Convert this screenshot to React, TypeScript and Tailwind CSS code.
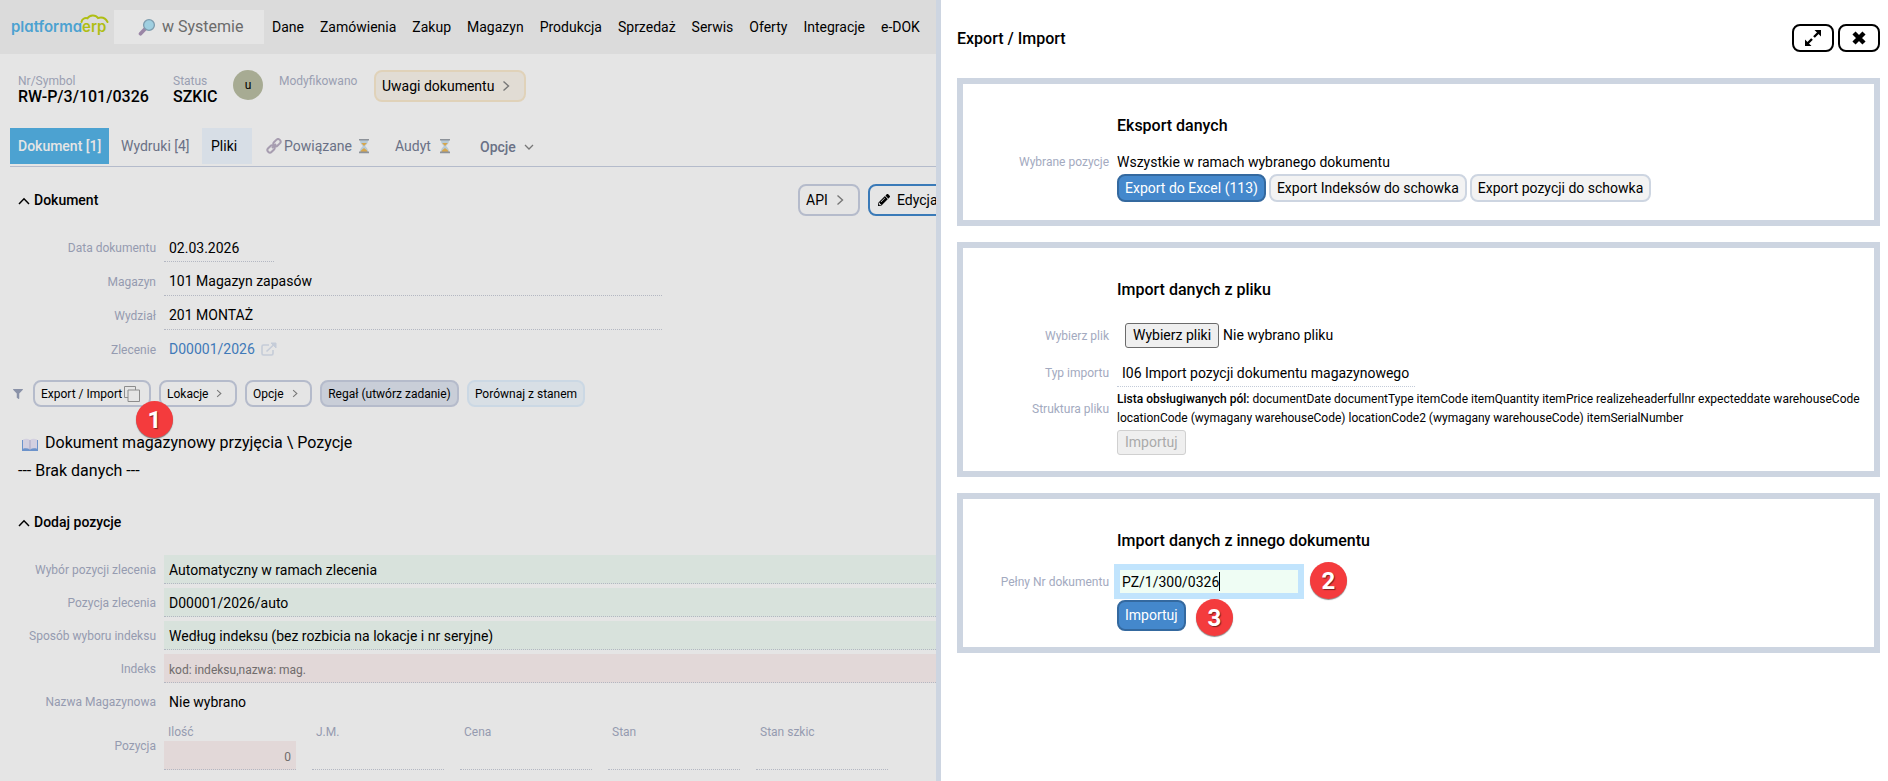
import type { ReactNode } from "react";
import { FaFilter, FaPencilAlt } from "react-icons/fa";

const NAV = ["Dane", "Zamówienia", "Zakup", "Magazyn", "Produkcja", "Sprzedaż", "Serwis", "Oferty", "Integracje", "e-DOK"];

function Chevron({ className = "h-3 w-2" }: { className?: string }) {
  return (
    <svg viewBox="0 0 8 12" className={`fill-none stroke-[#777777] stroke-[1.4] ${className}`} aria-hidden="true">
      <path d="M1.500 1.500 6.500 6l-5 4.500" />
    </svg>
  );
}

function Caret() {
  return (
    <svg viewBox="0 0 12 8" className="mt-0.5 h-2 w-3 fill-none stroke-black stroke-[1.5]" aria-hidden="true">
      <path d="M1 7 6 1.800 11 7" />
    </svg>
  );
}

function Hourglass() {
  return (
    <svg viewBox="0 0 12 16" className="h-4 w-3" aria-hidden="true">
      <path d="M2 2c0 3.500 1.500 4.500 3 6-1.500 1.500-3 2.500-3 6h8c0-3.500-1.500-4.500-3-6 1.500-1.500 3-2.500 3-6z" fill="#b7cad6" />
      <path d="M3.200 5h5.600L6 8zM2.500 14c.2-2 2-2.500 3.500-4 1.500 1.500 3.300 2 3.500 4z" fill="#d6a64c" />
      <path d="M1 1h10v1.600H1zM1 13.600h10v1.600H1z" fill="#8d9299" />
    </svg>
  );
}

function Logo() {
  return (
    <a href="#start" className="relative flex w-[98px] text-[15px] font-semibold leading-6 text-[#4ca2d1] font-['Inter',sans-serif] [font-feature-settings:'cv11','ss01']">
      platforma<span className="text-[#afbe13]">erp</span>
      <svg viewBox="0 0 29 9" className="absolute -top-px right-0 h-[9px] w-[29px] fill-none stroke-[#afbe13] stroke-2" aria-hidden="true">
        <path d="M1.500 8C2 5 4.500 3.600 7.500 4.300 9.500.8 15.500.3 18 4c3.500-1 7.500 0 9.500 4" strokeLinecap="round" />
      </svg>
    </a>
  );
}

function Magnifier() {
  return (
    <svg viewBox="0 0 18 18" className="h-[18px] w-[18px] shrink-0" aria-hidden="true">
      <path d="M2.500 15.800 7 11" stroke="#9a86a6" strokeWidth="3.600" strokeLinecap="round" />
      <circle cx="11" cy="7" r="5.400" fill="#9fcfe0" stroke="#7d9cae" strokeWidth="1.300" />
    </svg>
  );
}

function LinkIcon() {
  return (
    <svg viewBox="0 0 16 16" className="h-4 w-4 fill-none stroke-[#a79db0] stroke-2" aria-hidden="true">
      <rect x="7" y="2.200" width="8" height="5" rx="2.500" transform="rotate(-45 11 4.700)" />
      <rect x="1" y="8.500" width="8" height="5" rx="2.500" transform="rotate(-45 5 11)" />
      <path d="m6 10 4-4" />
    </svg>
  );
}

function Book() {
  return (
    <svg viewBox="0 0 18 14" className="mt-1 h-3.5 w-[18px]" aria-hidden="true">
      <path d="M1 2h16v11H1z" fill="#6c93cb" />
      <path d="M2 1.500C4.500.3 7 .5 9 2c2-1.500 4.500-1.700 7-.5v9.300c-2.500-.8-5-.6-7 .7-2-1.300-4.500-1.500-7-.7z" fill="#d3d0e0" />
      <path d="M9 2v9.500" stroke="#a9a7c4" />
    </svg>
  );
}

function Badge({ n, className }: { n: number; className: string }) {
  return (
    <span className={`absolute z-10 flex h-[37px] w-[37px] items-center justify-center rounded-full bg-[#f43b3d] text-[24px] font-bold leading-none text-white shadow-[0_1px_1px_rgba(0,0,0,0.45)] [text-shadow:1px_1px_1px_rgba(0,0,0,0.5)] ${className}`}>
      {n}
    </span>
  );
}

function Row({ label, id, low = false, children }: { label: string; id: string; low?: boolean; children: ReactNode }) {
  return (
    <div className="grid grid-cols-[146px_minmax(0,1fr)] items-center gap-x-2">
      <label htmlFor={id} className={`text-right text-[12px] leading-4 text-[#959bb0] ${low ? "pt-1.5" : "pt-px"}`}>{label}</label>
      {children}
    </div>
  );
}

function HeaderField({ label, value }: { label: string; value?: string }) {
  return (
    <div className="pt-[3px]">
      <div className="text-[12px] leading-4 text-[#9a9fb2]">{label}</div>
      <div className="text-[16px] font-medium leading-4">{value}</div>
    </div>
  );
}

const line = "border-b border-dotted border-[#b3b7c2]";

function DocumentPage() {
  return (
    <div className="min-w-0 overflow-hidden bg-[#e5e5e5]">
      <header className="flex h-[54px] items-center bg-[#dbdbdb] pl-[11px]">
        <Logo />
        <label className="ml-[5px] flex h-[34px] w-[150px] shrink-0 items-center gap-1.5 bg-[#e5e5e5] pl-6">
          <Magnifier />
          <input aria-label="Szukaj w systemie" placeholder="w Systemie" className="w-24 bg-transparent text-[16px] outline-none placeholder:text-[#6b6b6b]" />
        </label>
        <nav className="ml-2 flex gap-4 whitespace-nowrap text-[14px] leading-5">
          {NAV.map((item) => (
            <a key={item} href={`#${item}`}>{item}</a>
          ))}
        </nav>
      </header>

      <section className="flex items-start whitespace-nowrap pl-[18px] pt-4">
        <div className="w-[155px]"><HeaderField label="Nr/Symbol" value="RW-P/3/101/0326" /></div>
        <div className="w-[60px]"><HeaderField label="Status" value="SZKIC" /></div>
        <span className="flex h-[30px] w-[30px] items-center justify-center rounded-full bg-[#a7ab93] text-[12px]">u</span>
        <div className="ml-4 w-[95px]"><HeaderField label="Modyfikowano" /></div>
        <button className="flex h-8 w-[152px] items-center gap-2 rounded-lg border-2 border-[#e0d2b9] bg-[#e1dcd4] px-1.5 text-[14px]">
          Uwagi dokumentu <Chevron />
        </button>
      </section>

      <nav className="ml-2.5 mt-[23px] flex items-center whitespace-nowrap border-b border-[#b4bbcb] pb-0.5 text-[14px] text-[#6a7186]">
        <a href="#dokument" className="flex h-9 w-[99px] items-center bg-[#4ca2d1] pl-2 font-medium text-[#e5e5e5]">Dokument [1]</a>
        <a href="#wydruki" className="flex h-9 w-[93px] items-center pl-3">Wydruki [4]</a>
        <a href="#pliki" className="flex h-9 w-[50px] items-center bg-[#d7dee6] pl-[9px] text-black">Pliki</a>
        <a href="#powiazane" className="flex h-9 w-[129px] items-center pl-3.5"><LinkIcon /><span className="w-[76px] pl-0.5">Powiązane</span><Hourglass /></a>
        <a href="#audyt" className="flex h-9 w-[85px] items-center pl-3.5"><span className="w-11">Audyt</span><Hourglass /></a>
        <button className="flex h-9 items-center gap-2 pl-3.5 pt-0.5 font-medium">
          Opcje
          <svg viewBox="0 0 10 6" className="h-1.5 w-2.5 fill-none stroke-[#777777] stroke-[1.3]" aria-hidden="true"><path d="m1 1 4 4 4-4" /></svg>
        </button>
      </nav>

      <div className="mt-[17px] flex h-8 items-center whitespace-nowrap pl-[18px]">
        <h2 className="flex w-[780px] shrink-0 items-center gap-1 text-[14px] font-medium leading-6"><Caret /> Dokument</h2>
        <button className="flex h-8 w-[62px] shrink-0 items-center gap-2 rounded-lg border-2 border-[#b5bbcb] px-1.5 text-[14px]">API <Chevron /></button>
        <button className="ml-2 flex h-8 shrink-0 items-center gap-[7px] rounded-lg border-2 border-[#3a7ab8] px-2 text-[14px]"><FaPencilAlt className="h-3 w-3" /> Edycja</button>
      </div>

      <form className="mt-3 pl-2.5 text-[14px]">
        <Row low label="Data dokumentu" id="date"><input id="date" defaultValue="02.03.2026" className={`h-[34px] w-[110px] pl-[5px] pt-1.5 ${line}`} /></Row>
        <Row low label="Magazyn" id="store"><input id="store" defaultValue="101 Magazyn zapasów" className={`h-[34px] w-[498px] pl-[5px] pt-1 ${line}`} /></Row>
        <Row low label="Wydział" id="dept"><input id="dept" defaultValue="201 MONTAŻ" className={`h-[34px] w-[498px] pl-[5px] pt-1 ${line}`} /></Row>
        <Row low label="Zlecenie" id="order">
          <a id="order" href="#zlecenie" className="flex h-[34px] items-center gap-1.5 pl-[5px] pt-1 text-[#3f79b8]">
            D00001/2026
            <svg viewBox="0 0 16 14" className="h-3.5 w-4 fill-none stroke-[#c5ccd8] stroke-[1.6]" aria-hidden="true">
              <path d="M8 3H2.500Q1 3 1 4.500v7Q1 13 2.500 13h8q1.500 0 1.500-1.500V8M5.500 9.500 13 2.500" />
              <path d="M10 1h5v5z" fill="#c5ccd8" stroke="#c5ccd8" strokeWidth="1" />
            </svg>
          </a>
        </Row>
      </form>

      <div className="relative mt-4 flex items-center gap-2 whitespace-nowrap pl-[13px] text-[12px]">
        <FaFilter className="mr-0.5 h-2.5 w-2.5 text-[#8a92a8]" aria-label="Filtr" />
        <button className="flex h-[27px] w-[118px] items-center gap-0.5 rounded-lg border-2 border-[#b5bbcb] pl-1.5">
          Export / Import
          <svg viewBox="0 0 16 16" className="h-4 w-4 shrink-0 fill-[#e5e5e5] stroke-[#8c8c8c]" aria-hidden="true">
            <path d="M.5.5h11v11H.5z" /><path d="M4 4h11.500v11.500H4z" />
          </svg>
        </button>
        <button className="flex h-[27px] w-[78px] items-center gap-2 rounded-lg border-2 border-[#b5bbcb] pl-1.5">Lokacje <Chevron className="h-[9px] w-1.5" /></button>
        <button className="flex h-[27px] w-[67px] items-center gap-2 rounded-lg border-2 border-[#b5bbcb] pl-1.5">Opcje <Chevron className="h-[9px] w-1.5" /></button>
        <button className="h-[27px] w-[139px] rounded-lg border-2 border-[#b5bbcb] bg-[#c9ced8]">Regał (utwórz zadanie)</button>
        <button className="h-[27px] w-[118px] rounded-lg border-2 border-[#cbd8e4] bg-[#d8dfe5]">Porównaj z stanem</button>
        <Badge n={1} className="left-[136px] top-[21px]" />
      </div>

      <div className="mt-6 flex items-center gap-[6px] pl-[21px] text-[16px] leading-6"><Book /> Dokument magazynowy przyjęcia \ Pozycje</div>
      <p className="mt-1 pl-[18px] text-[16px] leading-6">--- Brak danych ---</p>

      <h2 className="mt-[27px] flex items-center gap-1 pl-[18px] text-[14px] font-medium leading-6"><Caret /> Dodaj pozycje</h2>
      <form className="mt-[21px] flex flex-col gap-1 pl-2.5 text-[14px]">
        <Row label="Wybór pozycji zlecenia" id="pick"><input id="pick" defaultValue="Automatyczny w ramach zlecenia" className={`h-[29px] bg-[#d8e2dc] pl-[5px] pt-0.5 ${line}`} /></Row>
        <Row label="Pozycja zlecenia" id="pos"><input id="pos" defaultValue="D00001/2026/auto" className={`h-[29px] bg-[#d8e2dc] pl-[5px] pt-0.5 ${line}`} /></Row>
        <Row label="Sposób wyboru indeksu" id="mode"><input id="mode" defaultValue="Według indeksu (bez rozbicia na lokacje i nr seryjne)" className={`h-[29px] bg-[#d8e2dc] pl-[5px] pt-0.5 ${line}`} /></Row>
        <Row label="Indeks" id="idx"><input id="idx" placeholder="kod: indeksu,nazwa: mag." className={`h-[29px] bg-[#e2d8d8] pl-[5px] pt-1 text-[12px] placeholder:text-[#706c6c] ${line}`} /></Row>
        <Row label="Nazwa Magazynowa" id="name"><output id="name" className="h-[29px] pl-[5px] leading-[31px]">Nie wybrano</output></Row>
        <Row label="Pozycja" id="qty">
          <div className="flex gap-4 text-[12px] text-[#959bb0]">
            {["Ilość", "J.M.", "Cena", "Stan", "Stan szkic"].map((name, i) => (
              <label key={name} className="w-[132px] shrink-0">
                <span className="block h-[21px] pl-1 pt-1 leading-4">{name}</span>
                <input id={i === 0 ? "qty" : undefined} placeholder={i === 0 ? "0" : undefined} className={`block h-[29px] w-full pr-[5px] pt-1 text-right placeholder:text-[#706c6c] ${i === 0 ? "bg-[#e2d8d8]" : ""} ${line}`} />
              </label>
            ))}
          </div>
        </Row>
      </form>
    </div>
  );
}

function Card({ title, children }: { title: string; children: ReactNode }) {
  return (
    <section className="border-[6px] border-[#cdd5e1] pl-[5px] pr-1.5 pt-[30px]">
      <h3 className="pl-[149px] text-[16px] font-medium leading-6">{title}</h3>
      {children}
    </section>
  );
}

const cell = "text-right text-[12px] leading-4 text-[#a3aac0]";
const grid = "grid grid-cols-[141px_minmax(0,1fr)] items-center gap-x-2";
const button = "h-7 whitespace-nowrap rounded-lg border-2 px-1.5";

function Drawer() {
  return (
    <aside className="min-w-0 border-l-[5px] border-[#cdd5e1] bg-white pb-6 pl-4 pr-2 pt-6 text-[14px]">
      <div className="flex h-7 items-center gap-1">
        <h1 className="mr-auto pt-0.5 text-[16px] font-medium">Export / Import</h1>
        <button aria-label="Powiększ" className="flex h-7 w-[42px] items-center justify-center rounded-lg border-2 border-black">
          <svg viewBox="0 0 18 18" className="h-[18px] w-[18px]" aria-hidden="true">
            <path d="M10.500 1H17v6.500zM1 10.500V17h6.500z" />
            <path d="m10 8 4.500-4.500M8 10l-4.500 4.500" stroke="black" strokeWidth="2.400" />
          </svg>
        </button>
        <button aria-label="Zamknij" className="flex h-7 w-[42px] items-center justify-center rounded-lg border-2 border-black">
          <svg viewBox="0 0 14 14" className="h-3.5 w-3.5 stroke-black stroke-[4.4]" aria-hidden="true">
            <path d="m2 2 10 10M12 2 2 12" />
          </svg>
        </button>
      </div>

      <div className="mt-[26px] flex flex-col gap-4">
        <Card title="Eksport danych">
          <div className={`mt-3.5 ${grid}`}>
            <span className={cell}>Wybrane pozycje</span>
            <span className="leading-5">Wszystkie w ramach wybranego dokumentu</span>
          </div>
          <div className="mb-[18px] mt-0.5 flex gap-[3px] pl-[149px]">
            <button className={`${button} border-[#34699f] bg-[#4488cc] text-white`}>Export do Excel (113)</button>
            <button className={`${button} border-[#cdd5e1] bg-[#f3f3f3]`}>Export Indeksów do schowka</button>
            <button className={`${button} border-[#cdd5e1] bg-[#f3f3f3]`}>Export pozycji do schowka</button>
          </div>
        </Card>

        <Card title="Import danych z pliku">
          <div className={`mt-[21px] h-[25px] ${grid}`}>
            <label htmlFor="file" className={cell}>Wybierz plik</label>
            <div className="relative flex items-center gap-1 pl-2">
              <input id="file" type="file" className="sr-only" />
              <label htmlFor="file" className="h-[25px] rounded-[3px] border border-[#6b6b6b] bg-[#efefef] px-[7px] leading-[23px]">Wybierz pliki</label>
              <span>Nie wybrano pliku</span>
            </div>
          </div>
          <div className={`mt-2.5 ${grid}`}>
            <label htmlFor="type" className={cell}>Typ importu</label>
            <select id="type" className="h-[29px] w-[298px] appearance-none border-b border-dotted border-[#c3cbd8] pl-[5px] pt-0.5">
              <option>I06 Import pozycji dokumentu magazynowego</option>
            </select>
          </div>
          <div className={`mt-[3px] text-[12px] leading-[19px] ${grid}`}>
            <span className={cell}>Struktura pliku</span>
            <p>
              <b className="font-medium">Lista obsługiwanych pól:</b> documentDate documentType itemCode itemQuantity itemPrice realizeheaderfullnr expecteddate warehouseCode
              <br />
              locationCode (wymagany warehouseCode) locationCode2 (wymagany warehouseCode) itemSerialNumber
            </p>
          </div>
          <button disabled className="mb-4 ml-[149px] mt-0.5 block h-[25px] rounded-[3px] border border-[#d0d0d0] bg-[#efefef] px-[7px] text-[#aaaaaa]">Importuj</button>
        </Card>

        <Card title="Import danych z innego dokumentu">
          <div className={`mt-[11px] ${grid}`}>
            <label htmlFor="number" className={cell}>Pełny Nr dokumentu</label>
            <div className="relative -ml-[3px] w-[190px]">
              <input id="number" defaultValue="PZ/1/300/0326" className="block h-[35px] w-full border-[6px] border-[#c1e4fd] bg-[#effdf4] pl-0.5 outline-none" />
              <span className="absolute left-[105px] top-2 h-[19px] w-px bg-black" />
              <Badge n={2} className="left-[196px] -top-0.5" />
            </div>
          </div>
          <div className="relative mb-4 mt-px pl-[149px]">
            <button className="block h-[31px] rounded-lg border-2 border-[#34699f] bg-[#4488cc] px-1.5 text-white">Importuj</button>
            <Badge n={3} className="left-[228px] -top-px" />
          </div>
        </Card>
      </div>
    </aside>
  );
}

export default function App() {
  return (
    <main className="grid min-h-screen grid-cols-[117fr_119fr] text-black font-['Roboto',sans-serif]">
      <DocumentPage />
      <Drawer />
    </main>
  );
}
